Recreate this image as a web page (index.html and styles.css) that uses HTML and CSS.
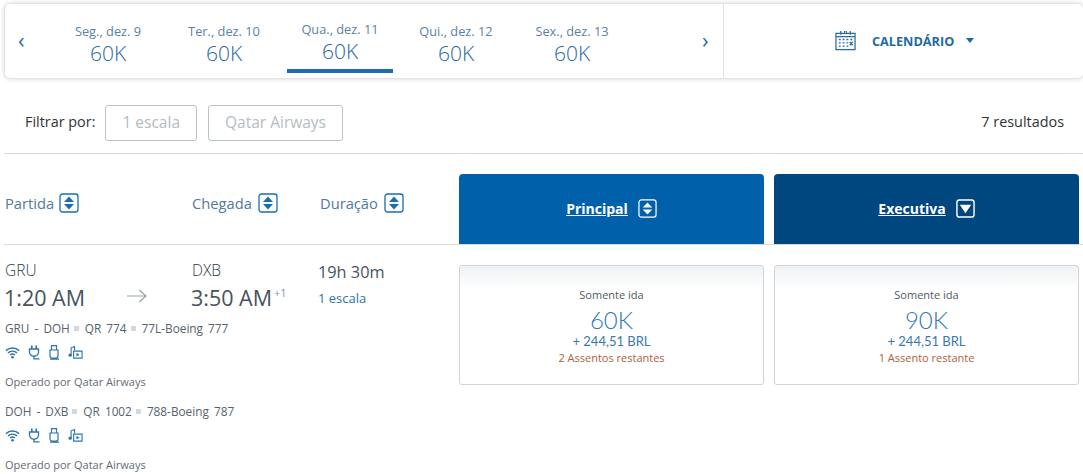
FILE: index.html
```html
<!DOCTYPE html>
<html lang="en">
<head>
  <meta charset="UTF-8">
  <title>Resultados</title>
  <link rel="stylesheet" href="styles.css">
</head>
<body>
  <svg class="defs" width="0" height="0">
    <symbol id="sort" viewBox="0 0 20 20">
      <rect x="1" y="1" width="18" height="18" rx="2.5" fill="none" stroke="currentColor" stroke-width="1.3"/>
      <path d="M10 3.6 15 9H5zM5 11h10l-5 5.4z" fill="currentColor"/>
    </symbol>
    <symbol id="wifi" viewBox="0 0 16 14">
      <path d="M1 5a10 10 0 0 1 14 0M3.200 7.400a7 7 0 0 1 9.600 0M5.400 9.700a4 4 0 0 1 5.200 0" fill="none" stroke="currentColor" stroke-width="1.500"/>
      <circle cx="8" cy="12" r="1.400" fill="currentColor"/>
    </symbol>
    <symbol id="plug" viewBox="0 0 12 15">
      <path d="M3 0.500h1.600v3.500H3zM7.400 0.500H9v3.500H7.400z" fill="currentColor"/>
      <path d="M1.500 4h9v3.500a4 4 0 0 1-4.500 3.500 4 4 0 0 1-4.500-3.500zM6 11v2.800h5.500" fill="none" stroke="currentColor" stroke-width="1.300"/>
    </symbol>
    <symbol id="usb" viewBox="0 0 12 15">
      <path d="M3.500 0.700h5v4.300h-5zM2 5h8v6a2 2 0 0 1-2 2H4a2 2 0 0 1-2-2zM2 14.200h9" fill="none" stroke="currentColor" stroke-width="1.200"/>
    </symbol>
    <symbol id="media" viewBox="0 0 16 15">
      <path d="M3.300 10V2.500L7 1.200V5" fill="none" stroke="currentColor" stroke-width="1.200"/>
      <circle cx="2.300" cy="10.300" r="1.800" fill="currentColor"/>
      <path d="M6 6h9v7.500H6z" fill="none" stroke="currentColor" stroke-width="1.200"/>
      <path d="M9 7.800v3.900l3.300-1.900z" fill="currentColor"/>
    </symbol>
  </svg>

  <div class="datebar">
    <div class="dates">
      <span class="chev">‹</span>
      <div class="days">
        <div class="day"><span class="day-name">Seg., dez. 9</span><span class="day-price">60K</span></div>
        <div class="day"><span class="day-name">Ter., dez. 10</span><span class="day-price">60K</span></div>
        <div class="day active"><span class="day-name">Qua., dez. 11</span><span class="day-price">60K</span></div>
        <div class="day"><span class="day-name">Qui., dez. 12</span><span class="day-price">60K</span></div>
        <div class="day"><span class="day-name">Sex., dez. 13</span><span class="day-price">60K</span></div>
      </div>
      <span class="chev">›</span>
    </div>
    <div class="calendar">
      <svg class="cal-icon" viewBox="0 0 22 22">
        <path d="M1 4h20v17H1zM1 7.500h20" fill="none" stroke="currentColor" stroke-width="1.300"/>
        <path d="M6 1.500v4M16 1.500v4M10 1.500v2M12 1.500v2" stroke="currentColor" stroke-width="1.300"/>
        <path d="M4 10.500h2M8 10.500h2M12 10.500h2M16 10.500h2M4 14h2M8 14h2M12 14h2M4 17.500h2M8 17.500h2M12 17.500h2" stroke="currentColor" stroke-width="1.400"/>
        <path d="M15.500 13l3 3.500M18.500 13l-3 3.500" stroke="currentColor" stroke-width="1.300"/>
      </svg>
      <span class="cal-label">CALENDÁRIO</span>
      <span class="caret"></span>
    </div>
  </div>

  <div class="filters">
    <span class="filter-label">Filtrar por:</span>
    <span class="filter">1 escala</span>
    <span class="filter">Qatar Airways</span>
    <span class="count">7 resultados</span>
  </div>

  <div class="heading">
    <div class="sort sort-dep">Partida <svg class="sort-icon"><use href="#sort"/></svg></div>
    <div class="sort sort-arr">Chegada <svg class="sort-icon"><use href="#sort"/></svg></div>
    <div class="sort sort-dur">Duração <svg class="sort-icon"><use href="#sort"/></svg></div>
    <div class="tab tab-main"><u>Principal</u> <svg class="tab-icon"><use href="#sort"/></svg></div>
    <div class="tab tab-exec"><u>Executiva</u>
      <svg class="tab-icon" viewBox="0 0 20 20">
        <rect x="1" y="1" width="18" height="18" rx="2.500" fill="none" stroke="currentColor" stroke-width="1.500"/>
        <path d="M4 6h12l-6 9z" fill="currentColor"/>
      </svg>
    </div>
  </div>

  <div class="flight">
    <div class="info">
      <div class="times">
        <div class="point">
          <div class="airport">GRU</div>
          <div class="time">1:20 AM</div>
        </div>
        <svg class="arrow" viewBox="0 0 20 14"><path d="M0 7h19M12.500 1l6.500 6-6.500 6" fill="none" stroke="currentColor" stroke-width="1.200"/></svg>
        <div class="point point-arr">
          <div class="airport">DXB</div>
          <div class="time">3:50 AM<sup>+1</sup></div>
        </div>
        <div class="point">
          <div class="duration">19h 30m</div>
          <div class="stops">1 escala</div>
        </div>
      </div>
      <div class="segment">
        <div class="seg-line">GRU - DOH<i></i>QR 774<i></i>77L-Boeing 777</div>
        <div class="amenities">
          <svg class="am am-wide"><use href="#wifi"/></svg>
          <svg class="am"><use href="#plug"/></svg>
          <svg class="am"><use href="#usb"/></svg>
          <svg class="am am-wide"><use href="#media"/></svg>
        </div>
        <div class="operator">Operado por Qatar Airways</div>
      </div>
      <div class="segment">
        <div class="seg-line">DOH - DXB<i></i>QR 1002<i></i>788-Boeing 787</div>
        <div class="amenities">
          <svg class="am am-wide"><use href="#wifi"/></svg>
          <svg class="am"><use href="#plug"/></svg>
          <svg class="am"><use href="#usb"/></svg>
          <svg class="am am-wide"><use href="#media"/></svg>
        </div>
        <div class="operator">Operado por Qatar Airways</div>
      </div>
    </div>
    <div class="fare fare-main">
      <div class="fare-type">Somente ida</div>
      <div class="fare-miles">60K</div>
      <div class="fare-cash">+ 244,51 BRL</div>
      <div class="fare-seats">2 Assentos restantes</div>
    </div>
    <div class="fare">
      <div class="fare-type">Somente ida</div>
      <div class="fare-miles">90K</div>
      <div class="fare-cash">+ 244,51 BRL</div>
      <div class="fare-seats">1 Assento restante</div>
    </div>
  </div>
</body>
</html>
```

FILE: styles.css
```css
body {
  margin: 0;
  height: 474px;
  overflow: hidden;
  background: #fff;
  font-family: "Open Sans", "Noto Sans", sans-serif;
  color: #36495a;
}
.defs {
  display: block;
  height: 0;
}

/* date bar */
.datebar {
  display: flex;
  height: 74px;
  margin: 4px 0 0 5px;
  background: #fff;
  border-radius: 5px;
  box-shadow: 0 0 5px rgba(0, 0, 0, 0.25);
}
.dates {
  display: flex;
  align-items: center;
  width: 718px;
  border-right: 1px solid #dfe3e6;
}
.chev {
  width: 17px;
  margin-top: -4px;
  padding-left: 13px;
  font-size: 22px;
  line-height: 1;
  color: #1f6fae;
}
.days {
  display: flex;
  width: 580px;
  margin: 0 59px 0 15px;
  align-self: stretch;
}
.day {
  width: 106px;
  margin: 0 5px;
  height: 69px;
  display: flex;
  flex-direction: column;
  align-items: center;
  padding-top: 19px;
  box-sizing: border-box;
  color: #1f66a3;
}
.day.active {
  padding-top: 17px;
  border-bottom: 4px solid #1a6db0;
}
.day-name {
  font-size: 12.8px;
  line-height: 17px;
  color: #5b82a5;
}
.day-price {
  font-size: 21px;
  font-weight: 300;
  line-height: 27px;
}
.calendar {
  flex: 1;
  display: flex;
  align-items: center;
  padding-left: 111px;
  color: #1f6aa5;
}
.cal-icon {
  width: 21px;
  height: 22px;
  margin-top: -2px;
  color: #2a6c99;
}
.cal-label {
  margin-left: 16px;
  font-size: 12.7px;
  font-weight: 700;
}
.caret {
  margin: -1px 0 0 12px;
  border-left: 4.5px solid transparent;
  border-right: 4.5px solid transparent;
  border-top: 5px solid #1f6aa5;
}

/* filters */
.filters {
  display: flex;
  align-items: center;
  height: 60px;
  margin-left: 4px;
  padding: 15px 19px 0 21px;
  border-bottom: 1px solid #d5d9dc;
  font-size: 14.4px;
  color: #333;
}
.filter-label {
  margin: 0 10px 3px 0;
}
.filter {
  height: 34px;
  margin-right: 11px;
  padding: 0 16px;
  line-height: 32px;
  border: 1px solid #b8c2c9;
  border-radius: 3px;
  font-size: 15.5px;
  color: #b4bcc2;
}
.count {
  margin: 0 0 3px auto;
}

/* column headings */
.heading {
  display: flex;
  align-items: center;
  height: 91px;
  margin-left: 4px;
  border-bottom: 1px solid #d5d9dc;
  box-sizing: border-box;
  font-size: 14.7px;
}
.sort {
  display: flex;
  align-items: center;
  gap: 6px;
  margin-top: 8px;
  color: #4f7ba0;
}
.sort-dep { width: 187px; padding-left: 1px; gap: 5px; }
.sort-arr { width: 128px; }
.sort-dur { width: 139px; }
.sort-icon {
  width: 20px;
  height: 20px;
  color: #1a6db0;
}
.tab {
  align-self: flex-end;
  display: flex;
  align-items: center;
  justify-content: center;
  gap: 10px;
  width: 305px;
  height: 70px;
  padding-bottom: 2px;
  box-sizing: border-box;
  border-radius: 4px 4px 0 0;
  font-size: 14px;
  font-weight: 700;
  color: #fff;
}
.tab-main {
  margin-right: 10px;
  background: #0061aa;
}
.tab-exec {
  background: #00467f;
}
.tab-icon {
  width: 19px;
  height: 19px;
}

/* flight row */
.flight {
  display: flex;
  margin-left: 4px;
  padding-top: 15px;
}
.info {
  flex: none;
  width: 455px;
}
.times {
  display: flex;
  height: 59px;
}
.point {
  width: 127px;
}
.point:first-child {
  width: 122px;
  padding-left: 1px;
}
.arrow {
  width: 20px;
  height: 14px;
  margin-top: 29px;
  margin-right: 45px;
  color: #9aa3a9;
}
.airport {
  font-size: 15.5px;
  font-weight: 300;
  line-height: 20px;
  color: #2c3a46;
}
.time {
  margin: 2px 0 0 -1px;
  font-size: 21.5px;
  line-height: 32px;
  white-space: nowrap;
  color: #46535e;
}
.time sup {
  margin-left: 2px;
  font-size: 11px;
  line-height: 0;
  vertical-align: 9px;
  color: #7d97ad;
}
.duration {
  margin-left: -1px;
  font-size: 16.3px;
  line-height: 24px;
  color: #46535e;
}
.stops {
  padding-top: 4px;
  margin-left: -1px;
  font-size: 13px;
  line-height: 20px;
  color: #2d74a8;
}
.segment {
  padding-left: 1px;
  height: 83px;
}
.seg-line {
  font-size: 11.8px;
  line-height: 18px;
  display: flex;
  align-items: center;
  word-spacing: 2px;
  color: #55626d;
}
.seg-line i {
  width: 5px;
  height: 5px;
  margin: 0 6px 0 4px;
  background: #d3d8dc;
}
.amenities {
  display: flex;
  align-items: center;
  gap: 8px;
  height: 18px;
  margin-top: 6px;
  color: #2a76ad;
}
.am {
  width: 12px;
  height: 15px;
}
.am-wide {
  width: 15px;
}
.operator {
  margin-top: 13px;
  font-size: 11px;
  line-height: 16px;
  color: #5f6b74;
}

/* fare cards */
.fare {
  flex: none;
  width: 305px;
  height: 120px;
  box-sizing: border-box;
  margin-top: 5px;
  padding-top: 21px;
  text-align: center;
  border: 1px solid #ccd5dc;
  border-radius: 3px;
  background: linear-gradient(#eff2f4, #fff 24px);
}
.fare-main {
  margin-right: 10px;
}
.fare-type {
  font-size: 11px;
  line-height: 16px;
  color: #4e5a63;
}
.fare-miles {
  margin-top: 3px;
  font-family: Lato, sans-serif;
  font-size: 24px;
  font-weight: 300;
  line-height: 28px;
  color: #2f78b8;
}
.fare-cash {
  font-family: Lato, sans-serif;
  font-size: 13px;
  line-height: 14px;
  color: #3a78ad;
}
.fare-seats {
  margin-top: 2px;
  font-size: 11px;
  line-height: 15px;
  color: #b0603a;
}
```
